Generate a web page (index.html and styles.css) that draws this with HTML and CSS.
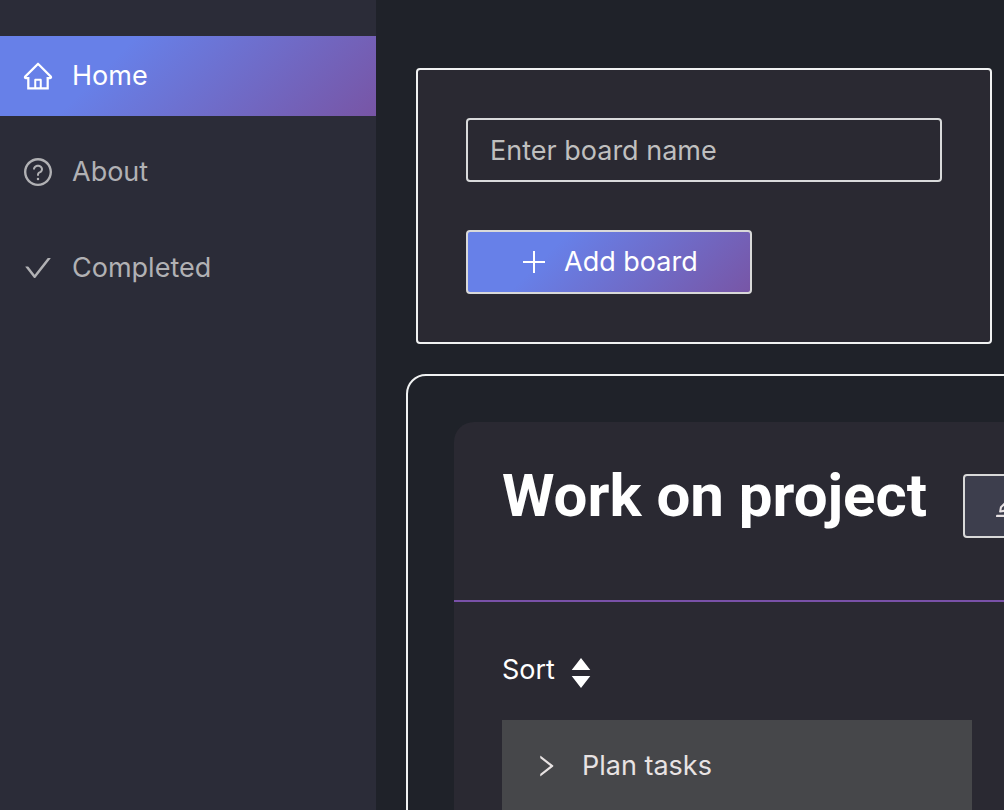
FILE: index.html
```html
<!DOCTYPE html>
<html lang="en">
<head>
<meta charset="utf-8">
<meta name="viewport" content="width=device-width, initial-scale=1">
<title>Boards</title>
<link rel="stylesheet" href="styles.css">
</head>
<body>
<div class="app">
  <nav class="sidebar" aria-label="Main">
    <a class="nav-item active" href="#home">
      <svg class="nav-icon" viewBox="0 0 1024 1024" aria-hidden="true"><path d="M946.5 505L560.1 118.8l-25.9-25.9a31.5 31.5 0 0 0-44.4 0L77.5 505a63.9 63.9 0 0 0-18.8 46c.4 35.2 29.7 63.3 64.9 63.3h42.5V940h691.8V614.3h43.4c17.1 0 33.2-6.7 45.3-18.8a63.6 63.6 0 0 0 18.7-45.3c0-17-6.7-33.1-18.8-45.2zM568 868H456V664h112v204zm217.9-325.7V868H632V640c0-22.1-17.9-40-40-40H432c-22.1 0-40 17.9-40 40v228H238.1V542.3h-96l370-369.7 23.1 23.1L882 542.3h-96.1z"/></svg>
      <span>Home</span>
    </a>
    <a class="nav-item" href="#about">
      <svg class="nav-icon" viewBox="0 0 1024 1024" aria-hidden="true"><path d="M512 64C264.6 64 64 264.6 64 512s200.6 448 448 448 448-200.6 448-448S759.4 64 512 64zm0 820c-205.4 0-372-166.6-372-372s166.6-372 372-372 372 166.6 372 372-166.6 372-372 372z"/><path d="M623.6 316.7C593.6 290.4 554 276 512 276s-81.6 14.5-111.6 40.7C369.2 344 352 380.7 352 420v7.6c0 4.4 3.6 8 8 8h48c4.4 0 8-3.6 8-8V420c0-44.1 43.1-80 96-80s96 35.9 96 80c0 31.1-22 59.6-56.1 72.7-21.2 8.1-39.2 22.3-52.1 40.9-13.1 19-19.9 41.8-19.9 64.9V620c0 4.4 3.6 8 8 8h48c4.4 0 8-3.6 8-8v-22.7a48.3 48.3 0 0 1 30.9-44.8c59-22.7 97.1-74.7 97.1-132.5.1-39.3-17.1-76-48.3-103.3zM472 732a40 40 0 1 0 80 0 40 40 0 1 0-80 0z"/></svg>
      <span>About</span>
    </a>
    <a class="nav-item" href="#completed">
      <svg class="nav-icon" viewBox="0 0 1024 1024" aria-hidden="true"><path d="M912 190h-69.9c-9.8 0-19.1 4.5-25.1 12.2L404.7 724.5 207 474a32 32 0 0 0-25.1-12.2H112c-6.7 0-10.4 7.7-6.3 12.9l273.9 347c12.8 16.2 37.4 16.2 50.3 0l488.4-618.9c4.1-5.1.4-12.8-6.3-12.8z"/></svg>
      <span>Completed</span>
    </a>
  </nav>

  <main class="content">
    <form class="board-form">
      <input class="text-input" type="text" aria-label="Board name" placeholder="Enter board name">
      <button class="button primary" type="button">
        <svg class="icon" viewBox="0 0 28 28" aria-hidden="true"><path d="M13 3h2v22h-2zM3 13h22v2H3z"/></svg>
        <span>Add board</span>
      </button>
    </form>

    <section class="board-list">
      <article class="board">
        <header class="board-header">
          <h1 class="board-title">Work on project</h1>
          <button class="button edit" type="button" aria-label="Edit board">
            <svg class="icon" viewBox="0 0 1024 1024" aria-hidden="true"><path d="M257.7 752c2 0 4-.2 6-.5L431.9 722c2-.4 3.9-1.3 5.3-2.8l423.9-423.9a9.96 9.96 0 0 0 0-14.1L694.9 114.9c-1.9-1.9-4.4-2.9-7.1-2.9s-5.2 1-7.1 2.9L256.8 538.8c-1.5 1.5-2.4 3.3-2.8 5.3l-29.5 168.2a33.5 33.5 0 0 0 9.4 29.8c6.6 6.4 14.9 9.9 23.8 9.9zm67.4-174.4L687.8 215l73.3 73.3-362.7 362.6-88.9 15.7 15.6-89zM880 836H144c-17.7 0-32 14.3-32 32v36c0 4.4 3.6 8 8 8h784c4.4 0 8-3.6 8-8v-36c0-17.7-14.3-32-32-32z"/></svg>
          </button>
        </header>
        <div class="board-body">
          <button class="sort" type="button">
            <span>Sort</span>
            <svg class="sort-icon" viewBox="0 0 20 32" aria-hidden="true"><path d="M10 1l9.300 12H.7zM.7 19h18.600L10 31z"/></svg>
          </button>
          <button class="task" type="button" aria-expanded="false">
            <svg class="icon" viewBox="0 0 1024 1024" aria-hidden="true"><path d="M765.7 486.8L314.9 134.7A7.97 7.97 0 0 0 302 141v77.3c0 4.900 2.300 9.600 6.100 12.600l360 281.100-360 281.100c-3.900 3-6.100 7.700-6.100 12.600V883c0 6.700 7.700 10.400 12.900 6.300l450.800-352.100a31.96 31.96 0 0 0 0-50.400z"/></svg>
            <span>Plan tasks</span>
          </button>
        </div>
      </article>
    </section>
  </main>
</div>
</body>
</html>
```

FILE: styles.css
```css
:root {
  --accent: linear-gradient(135deg, #6780e8 30%, #7855a5 100%);
  --panel: #2a2932;
}

* {
  box-sizing: border-box;
}

html {
  overflow: hidden;
}

body {
  margin: 0;
  background: #1f2229;
  color: #fff;
  font-family: Inter, "Open Sans", sans-serif;
  font-size: 27px;
  line-height: 44px;
}

button,
input {
  font: inherit;
  color: inherit;
}

button {
  cursor: pointer;
}

svg {
  flex: none;
  fill: currentColor;
}

.app {
  display: flex;
  height: 100vh;
  overflow: hidden;
}

.sidebar {
  display: flex;
  flex: none;
  flex-direction: column;
  gap: 16px;
  width: 376px;
  padding-top: 36px;
  background: #2b2c38;
}

.nav-item {
  display: flex;
  align-items: center;
  gap: 18px;
  height: 80px;
  padding: 0 22px;
  color: #b1b1b4;
  text-decoration: none;
}

.nav-item.active {
  background: var(--accent);
  color: #fff;
}

.nav-icon {
  width: 32px;
  height: 32px;
}

.icon {
  width: 28px;
  height: 28px;
}

.content {
  flex: 1;
  min-width: 0;
  padding: 68px 12px 0 30px;
}

.board-form {
  display: flex;
  flex-direction: column;
  align-items: flex-start;
  gap: 48px;
  margin: 0 0 30px 10px;
  padding: 48px;
  border: 2px solid #f0f2f2;
  border-radius: 4px;
  background: var(--panel);
}

.text-input {
  width: 100%;
  height: 64px;
  padding: 0 22px;
  border: 2px solid #d9dadb;
  border-radius: 4px;
  background: transparent;
}

.text-input::placeholder {
  color: #bfbfbf;
  opacity: 1;
}

.button {
  display: flex;
  align-items: center;
  height: 64px;
  border: 2px solid #d9d9d9;
  border-radius: 4px;
}

.primary {
  gap: 16px;
  padding: 0 52px;
  background: var(--accent);
  background-origin: border-box;
}

.edit {
  padding: 0 28px;
  background: #3d3e4d;
  color: #e8e2e4;
}

.board-list {
  width: max-content;
  padding: 46px;
  border: 2px solid #f0f2f2;
  border-radius: 20px;
}

.board {
  border-radius: 20px;
  background: var(--panel);
}

.board-header {
  display: flex;
  gap: 36px;
  padding: 38px 48px 62px;
  border-bottom: 2px solid #7951a8;
}

.board-header .edit {
  margin-top: 14px;
}

.board-title {
  margin: 0;
  font-family: Roboto, Inter, sans-serif;
  font-size: 60px;
  font-weight: 700;
  line-height: 72px;
  white-space: nowrap;
}

.board-body {
  padding: 46px 48px;
}

.sort {
  display: flex;
  align-items: center;
  gap: 16px;
  margin-bottom: 28px;
  padding: 0;
  border: 0;
  background: none;
}

.sort-icon {
  width: 20px;
  height: 32px;
  margin-top: 6px;
}

.task {
  display: flex;
  align-items: center;
  gap: 22px;
  width: 470px;
  height: 92px;
  padding: 0 30px;
  border: 0;
  background: #46474a;
  color: #e8e3e3;
}
```
